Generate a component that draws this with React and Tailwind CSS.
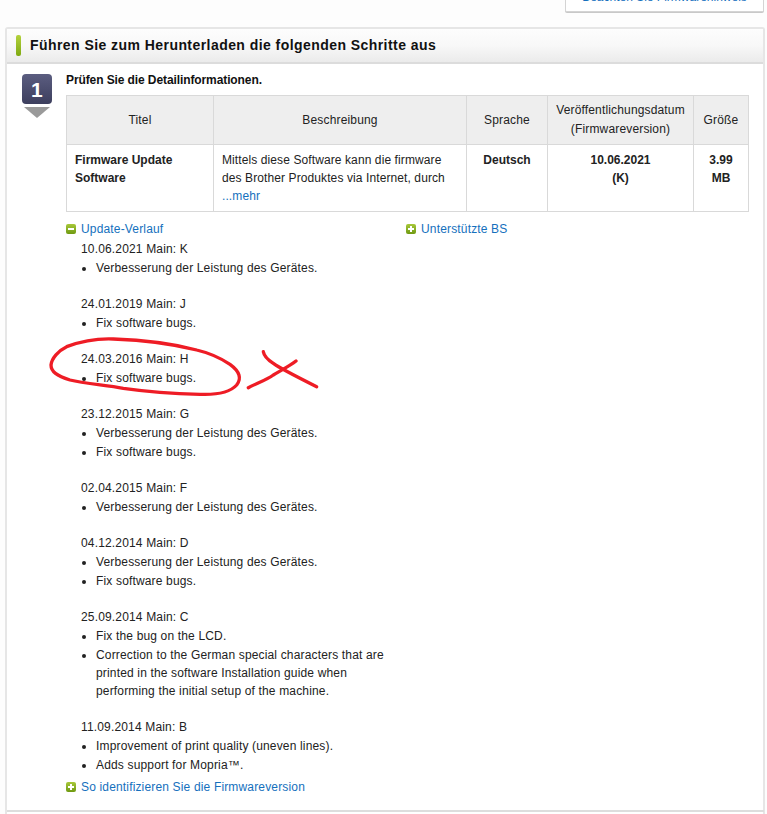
const entries = [
  ["10.06.2021 Main: K", ["Verbesserung der Leistung des Gerätes."], "mb-[17px]"],
  ["24.01.2019 Main: J", ["Fix software bugs."], "mb-[17px]"],
  ["24.03.2016 Main: H", ["Fix software bugs."], "mb-[17px]"],
  ["23.12.2015 Main: G", ["Verbesserung der Leistung des Gerätes.", "Fix software bugs."], "mb-[17px]"],
  ["02.04.2015 Main: F", ["Verbesserung der Leistung des Gerätes."], "mb-[17px]"],
  ["04.12.2014 Main: D", ["Verbesserung der Leistung des Gerätes.", "Fix software bugs."], "mb-[16.6px]"],
  ["25.09.2014 Main: C", ["Fix the bug on the LCD.", "Correction to the German special characters that are printed in the software Installation guide when performing the initial setup of the machine."], "mb-[18px]"],
  ["11.09.2014 Main: B", ["Improvement of print quality (uneven lines).", "Adds support for Mopria™."], "mb-0"],
];

function Toggle({ open }) {
  return (
    <span className="relative block w-[10px] h-[10px] rounded-[2px] bg-gradient-to-b from-[#a8c83a] to-[#6f9a10] shrink-0">
      <span className="absolute left-[2px] top-[4px] w-[6px] h-[2px] bg-white" />
      {!open && <span className="absolute left-[4px] top-[2px] w-[2px] h-[6px] bg-white" />}
    </span>
  );
}

function ToggleLink({ open, children }) {
  return (
    <div className="flex items-center gap-[5px] h-[16px] text-[#1570bd]">
      <Toggle open={open} />
      <span>{children}</span>
    </div>
  );
}

export default function App() {
  return (
    <div className="relative w-[767px] h-[814px] overflow-hidden bg-[#fdfdfd] text-[12px] leading-[19px] tracking-[0.16px] text-[#222] font-['Liberation_Sans',Arial,sans-serif]">
      <div className="flex justify-end pr-[3px] h-[27px]">
        <div className="w-[199px] h-[13px] -mt-[1px] bg-white border border-t-0 border-[#d4d4d4] rounded-b-[2px] shadow-[0_1px_0_#c8c8c8] overflow-hidden">
          <div className="text-[#1570bd] text-center tracking-normal -mt-[11px]">Beachten Sie Firmwarehinweis</div>
        </div>
      </div>

      <div className="mx-[5px] w-[760px] h-[790px] bg-white border-2 border-b-0 border-[#e6e6e6] rounded-t-[3px]">
        <div className="flex items-center h-[35px] pl-[9px] bg-gradient-to-b from-[#fdfdfd] via-[#f8f8f8] to-[#ebebeb] border-b-2 border-[#dcdcdc]">
          <span className="block w-[5px] h-[21px] rounded-[2px] bg-gradient-to-b from-[#b4d23c] to-[#7fa90f]" />
          <h2 className="ml-[9px] text-[14px] font-bold text-[#111] tracking-[0.44px]">Führen Sie zum Herunterladen die folgenden Schritte aus</h2>
        </div>

        <div className="flex pt-[10px] pl-[15px]">
          <div className="w-[30px] mr-[14px] shrink-0 flex flex-col items-center">
            <div className="flex items-center justify-center w-[30px] h-[30px] rounded-[4px] bg-gradient-to-b from-[#5b5d80] to-[#3d3f5e] text-white text-[21px] font-bold leading-none">1</div>
            <div className="mt-[3px] w-0 h-0 border-x-[13px] border-x-transparent border-t-[11px] border-t-[#9a9a9a]" />
          </div>

          <div className="w-[683px]">
            <p className="font-bold text-[#111] leading-[14px] tracking-[-0.1px] mb-[8px] -mt-[1px]">Prüfen Sie die Detailinformationen.</p>
            <table className="w-[682px] table-fixed border-collapse text-center">
              <colgroup>
                <col className="w-[147px]" />
                <col className="w-[253px]" />
                <col className="w-[81px]" />
                <col className="w-[146px]" />
                <col className="w-[55px]" />
              </colgroup>
              <thead>
                <tr className="h-[49px] bg-[#eeeeee] font-normal">
                  <th className="border border-[#d9d9d9] font-normal">Titel</th>
                  <th className="border border-[#d9d9d9] font-normal">Beschreibung</th>
                  <th className="border border-[#d9d9d9] font-normal">Sprache</th>
                  <th className="border border-[#d9d9d9] font-normal">Veröffentlichungsdatum<br />(Firmwareversion)</th>
                  <th className="border border-[#d9d9d9] font-normal">Größe</th>
                </tr>
              </thead>
              <tbody>
                <tr className="h-[67px] align-top">
                  <td className="border border-[#d9d9d9] text-left font-bold tracking-normal px-[8px] pt-[6px] pb-[4px] leading-[18px]">Firmware Update Software</td>
                  <td className="border border-[#d9d9d9] text-left px-[8px] pt-[6px] pb-[4px] leading-[18px] tracking-[0.1px]">
                    Mittels diese Software kann die firmware des Brother Produktes via Internet, durch
                    <br />
                    <span className="text-[#1570bd]">...mehr</span>
                  </td>
                  <td className="border border-[#d9d9d9] font-bold tracking-normal pt-[6px] leading-[18px]">Deutsch</td>
                  <td className="border border-[#d9d9d9] font-bold tracking-normal pt-[6px] leading-[18px]">10.06.2021<br />(K)</td>
                  <td className="border border-[#d9d9d9] font-bold tracking-normal pt-[6px] px-[8px] leading-[18px]">3.99 MB</td>
                </tr>
              </tbody>
            </table>

            <div className="grid grid-cols-[340px_1fr] mt-[9px]">
              <div>
                <ToggleLink open>Update-Verlauf</ToggleLink>
                <div className="pl-[15px] pt-[3px] w-[330px]">
                  {entries.map(([date, items, gap]) => (
                    <div key={date} className={gap}>
                      <p>{date}</p>
                      <ul className="list-disc pl-[15px]">
                        {items.map((t) => (
                          <li key={t} className={t.length > 60 ? "leading-[18.3px]" : ""}>{t}</li>
                        ))}
                      </ul>
                    </div>
                  ))}
                </div>
              </div>
              <ToggleLink>Unterstützte BS</ToggleLink>
            </div>
            <div className="mt-[4px]">
              <ToggleLink>So identifizieren Sie die Firmwareversion</ToggleLink>
            </div>
          </div>
        </div>
      </div>

      <div className="absolute left-[7px] right-[3px] top-[810px] h-[2px] bg-[#dddddd]" />

      <svg className="absolute left-[40px] top-[335px] pointer-events-none" width="300" height="70" viewBox="0 0 900 210" fill="none" stroke="#ee1c25" strokeWidth="10" strokeLinecap="round" strokeLinejoin="round">
        <path d="M220 12 C170 10 120 20 80 35 C55 47 35 70 33 90 C33 110 50 122 90 135 C130 145 190 150 250 160 C320 170 400 176 480 178 C530 180 570 172 590 150 C605 130 600 110 570 88 C540 68 500 52 470 45 C420 32 340 16 220 12 Z" />
        <path d="M670 50 C672 62 680 72 700 85 C720 100 780 130 830 155" />
        <path d="M625 158 C650 145 680 135 700 120 C725 105 750 92 768 78" />
      </svg>
    </div>
  );
}
